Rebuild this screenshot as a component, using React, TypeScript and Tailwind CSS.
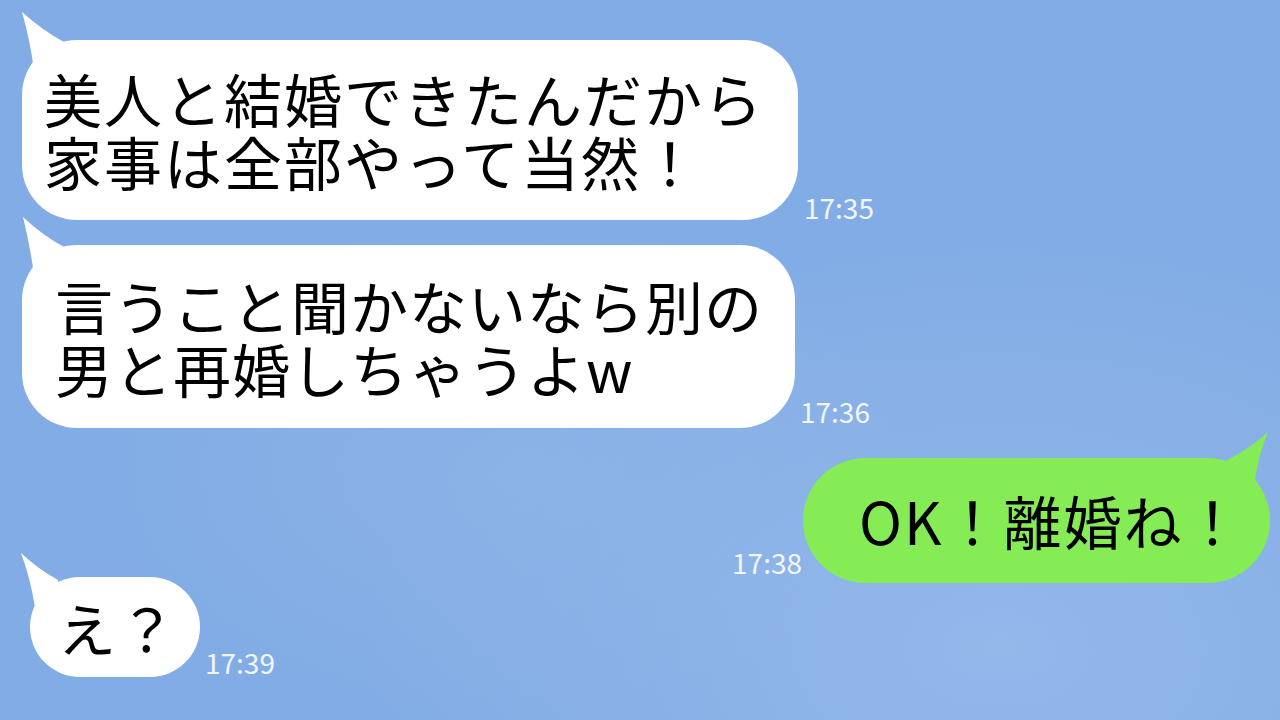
import React from "react";

const font = { fontFamily: '"Noto Sans CJK JP", "Noto Sans", sans-serif' };

function TailLeft({ d }: { d: string }) {
  return (
    <svg className="absolute left-0 top-0 overflow-visible" width="1" height="1" aria-hidden>
      <path d={d} fill="#ffffff" />
    </svg>
  );
}

export default function App() {
  return (
    <div
      className="relative w-[1280px] h-[720px] overflow-hidden flex flex-col bg-[#82ace5] bg-[radial-gradient(ellipse_at_78%_90%,#93b8ea_0%,rgba(147,184,234,0)_45%),radial-gradient(ellipse_at_40%_65%,#8bb2e7_0%,rgba(139,178,231,0)_38%)]"
      style={font}
    >
      {/* Message 1 */}
      <div className="mt-[40px] pl-[22px] flex items-end">
        <div className="relative w-[776px] h-[180px] rounded-[55px] bg-white flex items-center pl-[22px]">
          <TailLeft d="M0,-28 Q 20,-10 42,2 L 42,30 L 12,30 Q 8,0 0,-28 Z" />
          <p className="relative text-[58px] leading-[63px] tracking-[2px] text-black">
            美人と結婚できたんだから
            <br />
            家事は全部やって当然！
          </p>
        </div>
        <span className="ml-[6px] mb-[-1px] text-[28px] leading-none text-[#f3f6fb]">17:35</span>
      </div>

      {/* Message 2 */}
      <div className="mt-[25px] pl-[22px] flex items-end">
        <div className="relative w-[773px] h-[183px] rounded-[55px] bg-white flex items-center pl-[33px]">
          <TailLeft d="M1,-28 Q 20,-10 42,2 L 42,30 L 12,30 Q 8,0 1,-28 Z" />
          <p className="relative text-[58px] leading-[63px] tracking-[1px] text-black">
            言うこと聞かないなら別の
            <br />
            男と再婚しちゃうよw
          </p>
        </div>
        <span className="ml-[5px] mb-[3px] text-[28px] leading-none text-[#f3f6fb]">17:36</span>
      </div>

      {/* Message 3 (mine) */}
      <div className="mt-[30px] pr-[10px] flex items-end justify-end">
        <span className="mr-[1px] mb-[7px] text-[28px] leading-none text-[#f3f6fb]">17:38</span>
        <div className="relative w-[467px] h-[125px] rounded-full bg-[#86ec56] flex items-center pl-[56px]">
          <svg className="absolute right-0 top-0 overflow-visible" width="1" height="1" aria-hidden>
            <path d="M-1,-26 Q -18,-10 -42,2 L -42,30 L -15,30 Q -12,0 -1,-26 Z" fill="#86ec56" />
          </svg>
          <p className="relative text-[58px] leading-[63px] tracking-[2px] text-black">OK！離婚ね！</p>
        </div>
      </div>

      {/* Message 4 */}
      <div className="mt-[-6px] pl-[30px] flex items-end">
        <div className="relative w-[170px] h-[100px] rounded-full bg-white flex items-center justify-center">
          <TailLeft d="M-9,-24 Q 8,-8 28,3 L 28,30 L 5,30 Q 0,0 -9,-24 Z" />
          <p className="relative text-[58px] leading-[63px] tracking-[2px] text-black pl-[6px]">え？</p>
        </div>
        <span className="ml-[5px] mb-[1px] text-[28px] leading-none text-[#f3f6fb]">17:39</span>
      </div>
    </div>
  );
}
